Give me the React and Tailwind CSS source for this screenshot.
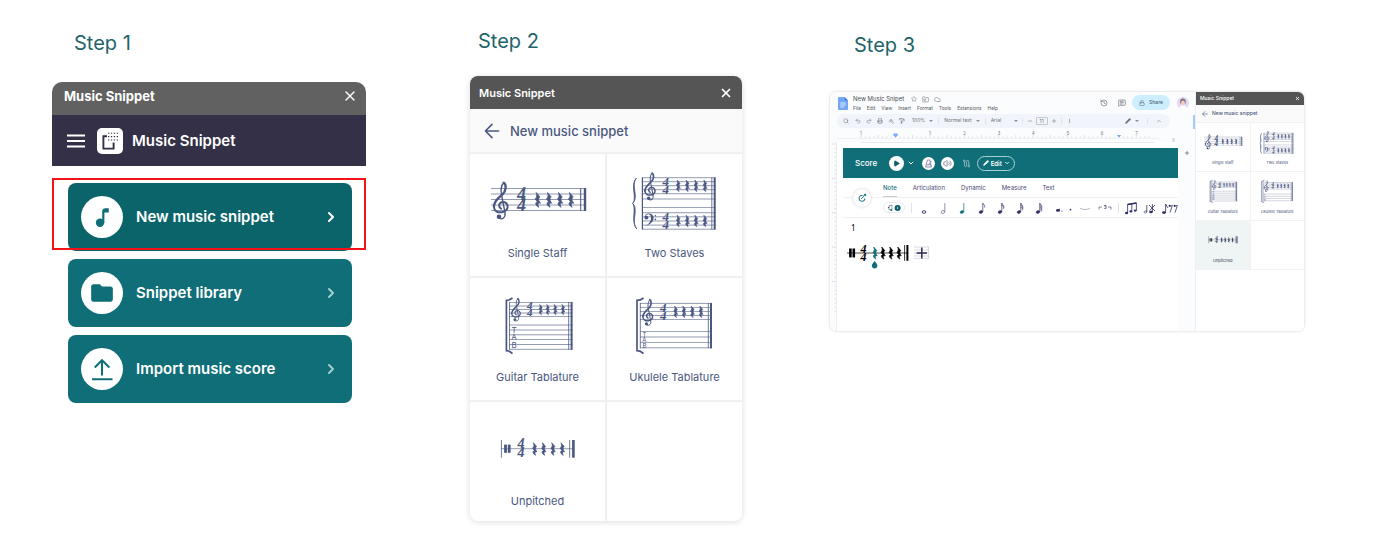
import React, { useState } from 'react';
import {
    ChevronDown, ChevronRight, ChevronUp, Cloud, FolderInput, History, Lock, MessageSquareText, Minus,
    PaintRoller, Pencil, Play, Plus, Printer, Redo2, Search, SpellCheck, Star, Undo2, Volume2, X,
} from 'lucide-react';
import { MdFolder } from 'react-icons/md';

/* ---------- notation drawings ---------- */

function TrebleClef({ x, y, s = 1 }) {
    return (
        <g transform={`translate(${x} ${y}) scale(${s})`} fill="none" stroke="currentColor" strokeLinecap="round">
            <path d="M11 1C8 4 8 9 9 14L12.3 31C13 36 9.5 38.3 6.5 36.5" strokeWidth="1.4" />
            <path d="M11 1C14 3 13.5 9 10 12.5C5 17 1.2 20 1.2 25" strokeWidth="2.3" />
            <path d="M1.2 25C1.4 29.5 5 31 9 30.6C13.4 30 15.6 27 14.8 23.6C14 20.6 10.6 19.4 8 21C5.6 22.6 6.2 26 8.4 27" strokeWidth="2" />
            <circle cx="6.3" cy="35" r="2.3" fill="currentColor" stroke="none" />
        </g>
    );
}

function BassClef({ x, y }) {
    return (
        <g transform={`translate(${x} ${y})`} fill="currentColor">
            <circle cx="2.4" cy="4.6" r="1.9" />
            <path d="M.8 4C.6 1.6 2.6.4 4.8.4C7.6.4 9.6 2.2 9.6 5C9.6 9 5.6 11.6 1.4 13C5 10.8 7 8.6 7 5.2C7 2.8 6.2 1.2 4.4 1.2C3 1.2 1.8 2 .8 4Z" />
            <circle cx="11.4" cy="2.8" r=".8" />
            <circle cx="11.4" cy="6.4" r=".8" />
        </g>
    );
}

function Rest({ x, y, s = 1, fill = 'currentColor' }) {
    return (
        <path
            transform={`translate(${x - 2.7 * s} ${y}) scale(${s})`}
            d="M1.2 0L4.9 4.4C3 6.5 3.4 7.6 5.4 10.8C3.2 10 2.2 11.6 3.8 14.8C.2 12.8-.2 9.8 2.4 9.4L.2 6.4C2.2 4.6 2 2.8 1.2 0Z"
            fill={fill}
            stroke={fill}
            strokeWidth="0.8"
        />
    );
}

function Rests({ xs, y, s }) {
    return xs.map((x) => <Rest key={x} x={x} y={y} s={s} />);
}

function TimeSignature({ x, y1, y2, size }) {
    return (
        <g fill="currentColor" fontFamily="Liberation Serif, serif" fontWeight="700" fontStyle="italic" fontSize={size}>
            <text x={x} y={y1}>4</text>
            <text x={x} y={y2}>4</text>
        </g>
    );
}

function Lines({ x1, x2, ys }) {
    return ys.map((y) => (
        <line key={y} x1={x1} x2={x2} y1={y} y2={y} stroke="currentColor" strokeWidth="0.8" opacity="0.75" />
    ));
}

function Bar({ x, y1, y2, w = 0.8 }) {
    return <line x1={x} x2={x} y1={y1} y2={y2} stroke="currentColor" strokeWidth={w} />;
}

function TabLetters({ x, ys, size }) {
    return (
        <g fill="currentColor" fontFamily="Inter, sans-serif" fontSize={size} textAnchor="middle">
            {['T', 'A', 'B'].map((l, i) => <text key={l} x={x} y={ys[i]}>{l}</text>)}
        </g>
    );
}

function SingleStaff({ className }) {
    return (
        <svg viewBox="0 0 100 50" className={className} aria-hidden="true">
            <Lines x1={3} x2={98} ys={[12.5, 18, 23.5, 29, 34.5]} />
            <TrebleClef x={4.7} y={5.7} />
            <TimeSignature x={29} y1={23.6} y2={34.8} size={18} />
            <Rests xs={[49.7, 61, 72, 83]} y={16.5} s={1} />
            <Bar x={92.7} y1={12.1} y2={34.9} w={1} />
            <Bar x={97} y1={12.1} y2={34.9} w={2.4} />
        </svg>
    );
}

function TwoStaves({ className }) {
    return (
        <svg viewBox="0 0 90 62" className={className} aria-hidden="true">
            <path d="M6.5 8C1.5 13 6.6 24 5 29C4.6 31 3.6 32.4 2.6 33.4C3.8 34.4 4.8 36 5 38C6.2 44 1.8 53 6.8 59C3.4 55 3.4 49 4 43C4.4 38.6 4 35 2.6 33.4C4.4 32 4.6 27.6 4 23C3.2 16 3 12 6.5 8Z" fill="currentColor" stroke="currentColor" strokeWidth="0.8" />
            <Lines x1={12} x2={85.7} ys={[7.7, 11.7, 15.7, 19.7, 23.7, 29, 37.4, 42.7, 46.8, 51, 55.1, 59.2]} />
            <Bar x={12.4} y1={7.4} y2={59.5} w={1.2} />
            <TrebleClef x={14} y={2.4} s={0.74} />
            <BassClef x={14} y={43} />
            <TimeSignature x={32.5} y1={15.8} y2={23.9} size={13} />
            <TimeSignature x={32.5} y1={50.9} y2={59.2} size={13} />
            <Rests xs={[48.3, 57.3, 66, 75]} y={10} s={0.78} />
            <Rests xs={[48.3, 57.3, 66, 75]} y={45.2} s={0.78} />
            <Bar x={81.8} y1={7.4} y2={59.5} />
            <Bar x={84.7} y1={7.4} y2={59.5} w={2} />
        </svg>
    );
}

function GuitarTab({ className }) {
    return (
        <svg viewBox="0 0 74 60" className={className} aria-hidden="true">
            <path d="M11.5 3C9 5 7 5.4 5.4 5.4V55.6C7 55.6 9 56 11.5 58.6" fill="none" stroke="currentColor" strokeWidth="1.7" />
            <Lines x1={8.3} x2={71.6} ys={[7.4, 11, 14.5, 18, 21.4, 30, 35, 39.8, 44.6, 49.5, 54.3]} />
            <Bar x={8.5} y1={7} y2={54.7} />
            <TrebleClef x={10} y={3} s={0.62} />
            <TimeSignature x={26} y1={14.4} y2={21.4} size={11} />
            <Rests xs={[39.7, 46.8, 54.3, 62]} y={9.4} s={0.7} />
            <TabLetters x={13} ys={[38, 45.3, 52.7]} size={8} />
            <Bar x={67.7} y1={7} y2={54.7} />
            <Bar x={70.6} y1={7} y2={54.7} w={2} />
        </svg>
    );
}

function UkuleleTab({ className }) {
    return (
        <svg viewBox="0 0 80 60" className={className} aria-hidden="true">
            <path d="M8.5 3C6 5 4 5.4 2 5.4V55.6C4 55.6 6 56 8.5 58.6" fill="none" stroke="currentColor" strokeWidth="1.7" />
            <Lines x1={5} x2={77} ys={[8.4, 12.4, 16.4, 20.5, 24.6, 36.4, 42, 47.4, 52.8]} />
            <Bar x={5.3} y1={8} y2={53.2} />
            <TrebleClef x={7} y={4} s={0.71} />
            <TimeSignature x={25} y1={16.5} y2={24.7} size={13} />
            <Rests xs={[40.7, 49, 57.4, 66]} y={11} s={0.78} />
            <TabLetters x={9.4} ys={[41.6, 47.2, 52.8]} size={6} />
            <Bar x={73.3} y1={8} y2={53.2} />
            <Bar x={76} y1={8} y2={53.2} w={2} />
        </svg>
    );
}

function Unpitched({ className }) {
    return (
        <svg viewBox="0 0 76 30" className={className} aria-hidden="true">
            <Lines x1={1} x2={73} ys={[14.7]} />
            <Bar x={1.4} y1={6} y2={23.7} />
            <Bar x={5.5} y1={10.6} y2={18.8} w={2.8} />
            <Bar x={9.2} y1={10.6} y2={18.8} w={2.8} />
            <TimeSignature x={17.5} y1={14.4} y2={23.4} size={14} />
            <Rests xs={[34.7, 43.7, 53, 62.3]} y={8.7} s={0.85} />
            <Bar x={69.7} y1={6} y2={23.7} />
            <Bar x={73.4} y1={6} y2={23.7} w={2.6} />
        </svg>
    );
}

const snippets = [
    { name: 'Single Staff', Drawing: SingleStaff, size: 'w-[100px]', small: 'w-[40px]' },
    { name: 'Two Staves', Drawing: TwoStaves, size: 'w-[90px]', small: 'w-[36px]' },
    { name: 'Guitar Tablature', Drawing: GuitarTab, size: 'w-[74px]', small: 'w-[30px]' },
    { name: 'Ukulele Tablature', Drawing: UkuleleTab, size: 'w-[80px]', small: 'w-[33px]' },
    { name: 'Unpitched', Drawing: Unpitched, size: 'w-[76px]', small: 'w-[30px]' },
];

/* ---------- step 1 ---------- */

function NoteIcon() {
    return (
        <svg viewBox="0 0 42 42" className="size-[42px]" aria-hidden="true">
            <circle cx="19" cy="26.8" r="4.2" fill="currentColor" />
            <path d="M21.2 27V15.4C21.2 13 22.6 12.2 24.4 12.2H27.8V16.4H23.4V27Z" fill="currentColor" />
        </svg>
    );
}

function UploadIcon() {
    return (
        <svg viewBox="0 0 42 42" className="size-[42px]" fill="none" stroke="currentColor" strokeWidth="2" aria-hidden="true">
            <path d="M21 27.5V12.5M13.8 19.5L21 12.2L28.4 19.5M11 31.2H31.5" />
        </svg>
    );
}

const actions = [
    { label: 'New music snippet', icon: <NoteIcon />, color: 'bg-[#0c646b]', chevron: 'text-white' },
    { label: 'Snippet library', icon: <MdFolder className="size-[26px]" />, color: 'bg-[#0f6e77]', chevron: 'text-[#a5cdd0]' },
    { label: 'Import music score', icon: <UploadIcon />, color: 'bg-[#0f6e77]', chevron: 'text-[#a5cdd0]' },
];

function HomePanel() {
    return (
        <div>
            <div className="flex h-[33px] items-center justify-between rounded-t-[10px] bg-[#616161] pr-2 pb-1.5 pl-3 text-white">
                <span className="text-[13px] leading-5 font-bold">Music Snippet</span>
                <button aria-label="Close"><X className="size-4" strokeWidth={2} /></button>
            </div>
            <div className="flex h-[51px] items-center bg-[#333048] px-3.5 text-white">
                <button aria-label="Menu">
                    <svg viewBox="0 0 20 14" className="h-3.5 w-5" aria-hidden="true">
                        <path d="M1 1.5H19M1 7H19M1 12.5H19" stroke="white" strokeWidth="1.8" />
                    </svg>
                </button>
                <svg viewBox="0 0 26 26" className="ml-[11px] size-[26px]" aria-hidden="true">
                    <rect width="26" height="26" rx="5" fill="white" />
                    <path d="M10 8.3H6.4V20.6H16.6V14.4" fill="none" stroke="#333048" strokeWidth="1.9" />
                    <path d="M11 5.2H21M11 8.6H21M11 12H21" stroke="#333048" strokeWidth="1.1" strokeDasharray="1.3 1.6" />
                </svg>
                <span className="ml-[9px] text-[15px] leading-5 font-semibold">Music Snippet</span>
            </div>
            <ul className="flex flex-col gap-2 pt-[17px] pr-3.5 pl-4">
                {actions.map((a, i) => (
                    <li key={a.label} className="relative">
                        <button className={`flex h-[68px] w-full items-center rounded-lg px-[13px] text-white ${a.color}`}>
                            <span className="flex size-[42px] items-center justify-center rounded-full bg-white text-[#0f6e77]">{a.icon}</span>
                            <span className="ml-[13px] text-[15px] leading-6 font-semibold">{a.label}</span>
                            <ChevronRight className={`ml-auto size-4 ${a.chevron}`} strokeWidth={3} />
                        </button>
                        {i === 0 && <span className="pointer-events-none absolute -top-[5px] -right-3.5 bottom-px -left-4 border-2 border-[#f5111a]" />}
                    </li>
                ))}
            </ul>
        </div>
    );
}

/* ---------- step 2 ---------- */

function BackArrow({ className }) {
    return (
        <svg viewBox="0 0 16 16" className={className} fill="none" stroke="currentColor" strokeWidth="1.6" strokeLinecap="round" strokeLinejoin="round" aria-hidden="true">
            <path d="M14.6 8H1.4M8 1.4L1.4 8L8 14.6" />
        </svg>
    );
}

function SnippetPanel() {
    return (
        <div className="overflow-hidden rounded-lg bg-white text-[#4a5780] shadow-[0_1px_6px_rgba(0,0,0,0.14)]">
            <div className="flex h-[33px] items-center justify-between bg-[#555555] px-[9px] text-white">
                <span className="text-[11px] leading-4 font-semibold">Music Snippet</span>
                <button aria-label="Close"><X className="size-3.5" strokeWidth={3} /></button>
            </div>
            <div className="flex h-[43px] items-center bg-[#fafafa] pl-3.5">
                <button aria-label="Back"><BackArrow className="size-4" /></button>
                <span className="ml-2.5 text-[13px] leading-5 font-medium">New music snippet</span>
            </div>
            <div className="grid grid-cols-2 gap-0.5 bg-[#f0f0f0] pt-0.5">
                {snippets.map(({ name, Drawing, size }) => (
                    <button key={name} className={`flex flex-col items-center bg-white pt-4 ${name === 'Unpitched' ? 'pb-3' : 'pb-[15px]'}`}>
                        <span className="flex h-[62px] items-center"><Drawing className={size} /></span>
                        <span className="mt-[13px] text-[11px] leading-4">{name}</span>
                    </button>
                ))}
                <div className="bg-white" />
            </div>
        </div>
    );
}

/* ---------- step 3 ---------- */

function Caret() {
    return <svg viewBox="0 0 4 2" className="h-0.5 w-1" aria-hidden="true"><path d="M0 0H4L2 2Z" fill="#8b8f94" /></svg>;
}

function Divider({ className = '' }) {
    return <span className={`w-px bg-[#dfe3e8] ${className}`} />;
}

function DocsHeader() {
    return (
        <div className="flex items-start pt-[3px]">
            <svg viewBox="0 0 10 13" className="mt-0.5 ml-2 h-[13px] w-2.5 shrink-0" aria-hidden="true">
                <path d="M1 0H6.6L10 3.4V12A1 1 0 0 1 9 13H1A1 1 0 0 1 0 12V1A1 1 0 0 1 1 0Z" fill="#72a7f8" />
                <path d="M6.6 0V3.4H10Z" fill="#3f7de0" />
                <path d="M2.3 6H7.7M2.3 8H7.7M2.3 10H6" stroke="white" strokeWidth=".8" />
            </svg>
            <div className="ml-[5px]">
                <div className="flex h-2 items-center gap-[5px] text-[#777b80]">
                    <span className="mr-0.5 text-[6px] leading-2 text-[#4b4f54]">New Music Snipet</span>
                    <Star className="size-1.5" />
                    <FolderInput className="size-[7px]" />
                    <Cloud className="size-[7px]" />
                </div>
                <div className="mt-px flex gap-[6px] font-[Roboto,sans-serif] text-[5px] leading-2 text-[#5b5f64]">
                    {['File', 'Edit', 'View', 'Insert', 'Format', 'Tools', 'Extensions', 'Help'].map((m) => (
                        <button key={m}>{m}</button>
                    ))}
                </div>
            </div>
            <div className="mr-1.5 ml-auto flex items-center text-[#6a6e73]">
                <button aria-label="History"><History className="size-2" /></button>
                <button aria-label="Comments" className="ml-2.5"><MessageSquareText className="size-2" /></button>
                <button className="ml-[6px] flex h-[15px] w-[38px] items-center justify-center gap-1 rounded-full bg-[#cdeeff] text-[5px] font-medium text-[#4a6274]">
                    <Lock className="size-1.5" />Share
                </button>
                <svg viewBox="0 0 12 12" className="ml-[7px] size-3" aria-hidden="true">
                    <circle cx="6" cy="6" r="6" fill="#e3d8f6" />
                    <path d="M2.6 11C2.8 9 4 8.2 6 8.2S9.2 9 9.6 11A6 6 0 0 1 2.6 11Z" fill="white" />
                    <path d="M3.2 6.4C2.6 2.6 4.4 1.4 6.2 1.6C8.6 1.8 9.2 4 8.8 6.4Z" fill="#8a7482" />
                    <ellipse cx="6" cy="6" rx="2" ry="2.5" fill="#f2cdbd" />
                </svg>
            </div>
        </div>
    );
}

function DocsToolbar() {
    return (
        <div className="relative mt-0.5 mr-[25px] ml-[7px] flex h-3.5 items-center rounded-full bg-[#f1f5fb] pl-1.5 text-[#6f7378]">
            <div className="flex items-center gap-[5px]">
                <button aria-label="Search"><Search className="size-1.5" /></button>
                <button aria-label="Undo" className="ml-px"><Undo2 className="size-1.5" /></button>
                <button aria-label="Redo"><Redo2 className="size-1.5" /></button>
                <button aria-label="Print"><Printer className="size-1.5" /></button>
                <button aria-label="Spelling"><SpellCheck className="size-1.5" /></button>
                <button aria-label="Paint format"><PaintRoller className="size-1.5" /></button>
            </div>
            <button className="ml-[7px] flex items-center gap-1 text-[5px]">100% <Caret /></button>
            <Divider className="mx-[5px] h-1.5" />
            <button className="flex items-center gap-1 text-[5px]">Normal text <Caret /></button>
            <Divider className="mx-[5px] h-1.5" />
            <button className="flex w-[27px] items-center justify-between text-[5px]">Arial <Caret /></button>
            <Divider className="mx-1 h-1.5" />
            <button aria-label="Smaller"><Minus className="size-1.5" /></button>
            <input aria-label="Font size" defaultValue="11" className="mx-[3px] h-2 w-3 rounded-[1px] border border-[#c3c7cc] text-center text-[5px] leading-none" />
            <button aria-label="Larger"><Plus className="size-1.5" /></button>
            <Divider className="mx-1 h-1.5" />
            <button aria-label="More" className="ml-[3px] h-1 w-px bg-[#a8acb1]" />
            <button aria-label="Editing mode" className="ml-auto flex items-center gap-1"><Pencil className="size-1.5" fill="currentColor" /><Caret /></button>
            <Divider className="mx-2 h-1.5" />
            <button aria-label="Collapse" className="mr-2"><ChevronUp className="size-1.5" /></button>
            <span className="absolute top-px -right-[25px] h-3.5 w-0.5 bg-[#a9c7fa]" />
        </div>
    );
}

function Ruler() {
    const ticks = Array.from({ length: 68 }, (_, i) => 31 + i * 4.3);
    return (
        <svg viewBox="0 0 365 12" className="mt-0.5 w-full" aria-hidden="true">
            {ticks.map((x, i) => (
                <line key={x} x1={x} x2={x} y1={i % 4 === 0 ? 5 : 6.5} y2="8" stroke="#c9ccd1" strokeWidth=".6" />
            ))}
            <g fontFamily="Roboto, sans-serif" fontSize="4.5" fill="#74787d" textAnchor="middle">
                {[1, 2, 3, 4, 5, 6, 7].map((n) => <text key={n} x={65.7 + n * 34.4} y="5">{n}</text>)}
                <text x="31" y="5">1</text>
            </g>
            <path d="M63.4 3.6H67.8V5.4L65.6 7.6L63.4 5.4ZM286.8 5H291.2L289 7.6Z" fill="#7baaf7" />
            <path d="M7 8.6H330" stroke="#e6eaef" strokeWidth=".6" />
            <rect x="342" y="8" width="3" height="4" rx="1" fill="#dde0e4" />
        </svg>
    );
}

function VerticalRuler() {
    return (
        <svg viewBox="0 0 7 189" className="h-[189px] w-[7px] shrink-0" aria-hidden="true">
            {Array.from({ length: 40 }, (_, i) => (
                <line key={i} x1={i % 8 === 0 ? 2 : 4.5} x2="6" y1={2 + i * 4.3} y2={2 + i * 4.3} stroke="#c9ccd1" strokeWidth=".6" />
            ))}
            <path d="M6.7 0V189" stroke="#dde1e6" strokeWidth=".6" />
        </svg>
    );
}

function Note({ flags = 0, hollow = false, stem = true, color = '#2f2f63' }) {
    return (
        <svg viewBox="0 0 10 14" className="h-3.5 w-2.5" fill="none" stroke={color} aria-hidden="true">
            <ellipse cx="4" cy="11" rx="1.9" ry="1.3" transform={stem ? 'rotate(-20 4 11)' : undefined} fill={hollow ? 'none' : color} strokeWidth={stem ? '.5' : '.9'} />
            {stem && <path d="M5.8 10.6V2" strokeWidth={hollow ? '.5' : '.7'} />}
            {Array.from({ length: flags }, (_, i) => (
                <path key={i} d={`M5.8 ${2 + i * 1.9}C6.2 ${3.8 + i * 1.6} 8.6 ${4 + i * 1.6} 7.6 ${6.6 + i * 1.3}`} strokeWidth=".6" />
            ))}
        </svg>
    );
}

const notes = [
    { name: 'Whole', hollow: true, stem: false },
    { name: 'Half', hollow: true },
    { name: 'Quarter', color: '#0f6e77' },
    { name: 'Eighth', flags: 1 },
    { name: 'Sixteenth', flags: 2 },
    { name: 'Thirty-second', flags: 3 },
    { name: 'Sixty-fourth', flags: 4 },
];

function NoteToolbar() {
    return (
        <div className="flex h-5 items-center border-b border-[#f0f1f3] pl-10">
            <button aria-label="Voices" className="flex h-[11px] w-[22px] shrink-0 items-center justify-center gap-0.5 rounded-full border border-[#e8eaee]">
                <svg viewBox="0 0 14 8" className="h-2 w-3.5" aria-hidden="true">
                    <path d="M2.2 6V1.4H5V5.4" fill="none" stroke="#2f2f63" strokeWidth=".7" strokeDasharray="1 .4" />
                    <circle cx="4.2" cy="6" r="1.1" fill="#0f6e77" />
                    <circle cx="1.6" cy="3.6" r=".6" fill="#2f2f63" />
                    <circle cx="10.6" cy="4" r="3" fill="#0c5f68" />
                    <path d="M10.6 2.8V5.2" stroke="white" strokeWidth=".7" />
                </svg>
            </button>
            <Divider className="mr-[3px] ml-[6px] h-2.5 shrink-0" />
            {notes.map(({ name, ...rest }) => (
                <button key={name} aria-label={name} className="flex w-[19px] shrink-0 justify-center"><Note {...rest} /></button>
            ))}
            <button aria-label="Dotted" className="ml-0.5 shrink-0">
                <svg viewBox="0 0 24 14" className="h-3.5 w-6" fill="#2f2f63" aria-hidden="true">
                    <ellipse cx="8" cy="9.4" rx="2" ry="1.3" /><path d="M9.4 9V7.6H10V9Z" /><circle cx="12" cy="10" r=".6" /><circle cx="20.5" cy="8.6" r=".9" />
                </svg>
            </button>
            <button aria-label="Tie" className="ml-[5px] shrink-0">
                <svg viewBox="0 0 12 6" className="h-1.5 w-3" aria-hidden="true"><path d="M1 3C3.4 5 8.6 5 11 3" fill="none" stroke="#8f92a8" strokeWidth=".7" /></svg>
            </button>
            <button aria-label="Triplet" className="ml-[7px] shrink-0">
                <svg viewBox="0 0 14 8" className="h-2 w-3.5" aria-hidden="true">
                    <path d="M1 5.5V3H4M10 3H13V5.5" fill="none" stroke="#55577a" strokeWidth=".7" />
                    <text x="7" y="5.4" fontSize="5" fontWeight="600" fontFamily="Inter, sans-serif" textAnchor="middle" fill="#2f2f63">3</text>
                </svg>
            </button>
            <Divider className="mx-1.5 h-2.5 shrink-0" />
            <svg viewBox="0 0 58 14" className="h-3.5 w-[58px] shrink-0" fill="none" stroke="#2f2f63" strokeWidth=".8" aria-hidden="true">
                <path d="M2.6 12V3.4L11.4 2V9.6M6.8 11V3" />
                <path d="M2.6 3.4L11.4 2" strokeWidth="1.5" />
                <g fill="#2f2f63" stroke="none">
                    <ellipse cx="1.6" cy="12" rx="1.6" ry="1.2" /><ellipse cx="5.8" cy="10.4" rx="1.5" ry="1.1" /><ellipse cx="10.2" cy="9.6" rx="1.5" ry="1.1" />
                    <ellipse cx="26" cy="11" rx="1.8" ry="1.2" /><ellipse cx="39" cy="11.6" rx="1.9" ry="1.3" />
                    <circle cx="44.6" cy="4.8" r="1" /><circle cx="49.6" cy="4.8" r="1" />
                </g>
                <ellipse cx="20.4" cy="11" rx="1.4" ry="1" strokeWidth=".6" />
                <path d="M21.8 11V4M27.4 11V3M24 4L30 10M30 4L24.6 9.6M40.6 11.4V3L43 7M44 5.4L47.4 4.4L45 11.6M49 5.4L52.4 4.4L50 11.6" />
            </svg>
        </div>
    );
}

function ScoreEditor() {
    const [tab, setTab] = useState('Note');
    return (
        <div className="mt-[5px] ml-1.5 overflow-hidden bg-white">
            <div className="flex h-[30px] items-center bg-[#0f6e77] pl-3 text-white">
                <span className="text-[8px] font-medium">Score</span>
                <button aria-label="Play" className="ml-3 flex size-[15px] items-center justify-center rounded-full bg-white text-[#0c5f68]">
                    <Play className="size-[7px]" fill="currentColor" />
                </button>
                <button aria-label="Playback options" className="ml-[3px]"><ChevronDown className="size-2" strokeWidth={3} /></button>
                <button aria-label="Metronome" className="ml-[7px] flex size-[13px] items-center justify-center rounded-full bg-white">
                    <svg viewBox="0 0 9 9" className="size-[9px]" fill="none" stroke="#77759b" strokeWidth=".8" aria-hidden="true">
                        <path d="M3.4 1H5.8L7.4 8H1.6ZM2 5.8H7M4.4 5.6L7.6 2" />
                    </svg>
                </button>
                <button aria-label="Volume" className="ml-[6px] flex size-[13px] items-center justify-center rounded-full bg-white text-[#77759b]">
                    <Volume2 className="size-[9px]" />
                </button>
                <button aria-label="Tuning" className="ml-2">
                    <svg viewBox="0 0 9 9" className="size-[9px]" fill="none" stroke="#b4d6d9" strokeWidth=".7" aria-hidden="true">
                        <path d="M2.4 3V6.4C2.4 8 4.6 8 4.6 6.4V2.6C4.6 1 6.8 1 6.8 2.6V6" />
                        <circle cx="2.4" cy="2" r=".9" /><circle cx="6.8" cy="7" r=".9" />
                    </svg>
                </button>
                <button className="ml-[6px] flex h-[15px] w-[38px] items-center justify-center gap-0.5 rounded-full border border-[#a8d0d3] text-[6px] font-semibold">
                    <Pencil className="size-1.5" fill="currentColor" />Edit<ChevronDown className="size-1.5" strokeWidth={3.5} />
                </button>
            </div>
            <div className="relative">
                <div className="flex h-5 items-stretch gap-4 border-b border-[#f0f1f3] pl-10 text-[6px] text-[#4a4a73]">
                    {['Note', 'Articulation', 'Dynamic', 'Measure', 'Text'].map((t) => (
                        <button
                            key={t}
                            onClick={() => setTab(t)}
                            className={t === tab ? 'border-b border-[#c5cbd0] pt-px font-medium text-[#0f6e77]' : ''}
                        >
                            {t}
                        </button>
                    ))}
                </div>
                <NoteToolbar />
                <button aria-label="Input mode" className="absolute top-[11px] left-2.5 flex size-[18px] items-center justify-center rounded-full bg-white shadow-[0_0_3px_rgba(0,0,0,0.2)]">
                    <svg viewBox="0 0 10 10" className="size-2.5" fill="none" stroke="#0f6e77" strokeWidth="1" aria-hidden="true">
                        <path d="M8 5.4A3 3 0 1 1 5.6 2.4M4.4 5.8L8 2.2M6.6 2.2L8.4 1L8.8 3.2" />
                    </svg>
                </button>
            </div>
            <div className="pt-1 pl-1">
                <p className="pl-1 font-['Noto_Sans',sans-serif] text-[8px] leading-3 text-black">1</p>
                <svg viewBox="0 0 86 30" className="mt-[7px] w-[86px] text-black" aria-hidden="true">
                    <path d="M0 12H60" stroke="currentColor" strokeWidth=".7" />
                    <Bar x={3.4} y1={7.6} y2={16.4} w={2.6} />
                    <Bar x={6.8} y1={7.6} y2={16.4} w={2.6} />
                    <TimeSignature x={13.4} y1={11.8} y2={20} size={12} />
                    <Rest x={28} y={6} s={0.82} fill="#0f6e77" />
                    <Rests xs={[36, 44, 52]} y={6} s={0.82} />
                    <Bar x={57.6} y1={4} y2={19.8} w={0.8} />
                    <Bar x={60.4} y1={4} y2={19.8} w={2} />
                    <path d="M27.6 20C29.4 22.4 30.4 23.2 30.4 24.6A2.8 2.8 0 0 1 24.8 24.6C24.8 23.2 25.8 22.4 27.6 20Z" fill="#0f6e77" />
                    <path d="M67 6H82M67 9H82M67 12H82M67 15H82M67 17.6H82M81.6 6V17.6" stroke="#c3c3d0" strokeWidth=".6" />
                    <path d="M74.8 6.6V17.4M69.6 12H80" stroke="#2b2850" strokeWidth="1.5" />
                </svg>
            </div>
        </div>
    );
}

function MiniSidebar() {
    return (
        <div className="w-[108px] shrink-0 bg-white text-[#4a5780]">
            <div className="flex h-[13px] items-center justify-between bg-[#555555] px-1 text-white">
                <span className="text-[5px] font-medium">Music Snippet</span>
                <button aria-label="Close" className="flex"><X className="size-[5px]" strokeWidth={4} /></button>
            </div>
            <div className="flex h-[17px] items-center bg-[#fafafa] pl-1.5">
                <button aria-label="Back"><BackArrow className="size-1.5" /></button>
                <span className="ml-1 text-[5px] font-medium">New music snippet</span>
            </div>
            <div className="grid grid-cols-2 gap-px bg-[#f2f2f2] py-px">
                {snippets.map(({ name, Drawing, small }) => (
                    <button key={name} className={`flex flex-col items-center pt-1.5 pb-1 ${name === 'Unpitched' ? 'bg-[#eff5f5] text-[#2d3350]' : 'bg-white'}`}>
                        <span className="flex h-[26px] items-center"><Drawing className={small} /></span>
                        <span className="mt-1 text-[4px] leading-2">{name}</span>
                    </button>
                ))}
                <div className="bg-white" />
            </div>
        </div>
    );
}

function DocsWindow() {
    return (
        <div className="flex overflow-hidden rounded-md bg-white shadow-[0_0_3px_rgba(0,0,0,0.2)]">
            <div className="flex min-w-0 flex-1 flex-col border-r border-[#eceff3] bg-[#fbfcfe]">
                <DocsHeader />
                <DocsToolbar />
                <Ruler />
                <div className="flex flex-1">
                    <VerticalRuler />
                    <div className="min-w-0 flex-1 bg-white">
                        <div className="mr-6 ml-6 border-t border-[#e6e9ed]" />
                        <ScoreEditor />
                    </div>
                    <div className="flex w-[17px] shrink-0 flex-col items-center pt-2">
                        <button aria-label="Add-ons" className="flex text-[#55595e]"><Plus className="size-1.5" strokeWidth={2.5} /></button>
                    </div>
                </div>
            </div>
            <MiniSidebar />
        </div>
    );
}

export default function App() {
    return (
        <main className="grid min-h-screen grid-cols-[minmax(0,330fr)_minmax(0,272fr)_minmax(0,474fr)] items-start gap-x-[88px] bg-white pr-24 pb-9 pl-[52px] font-[Inter,sans-serif]">
            <section className="pt-[29px] pr-4">
                <h2 className="mb-[25px] pl-[22px] text-[20px] leading-7 font-normal text-[#1f646b]">Step 1</h2>
                <HomePanel />
            </section>
            <section className="pt-[27px]">
                <h2 className="mb-[21px] pl-2 text-[20px] leading-7 font-normal text-[#1f646b]">Step 2</h2>
                <SnippetPanel />
            </section>
            <section className="pt-[31px]">
                <h2 className="mb-[33px] pl-6 text-[20px] leading-7 font-normal text-[#1f646b]">Step 3</h2>
                <DocsWindow />
            </section>
        </main>
    );
}
